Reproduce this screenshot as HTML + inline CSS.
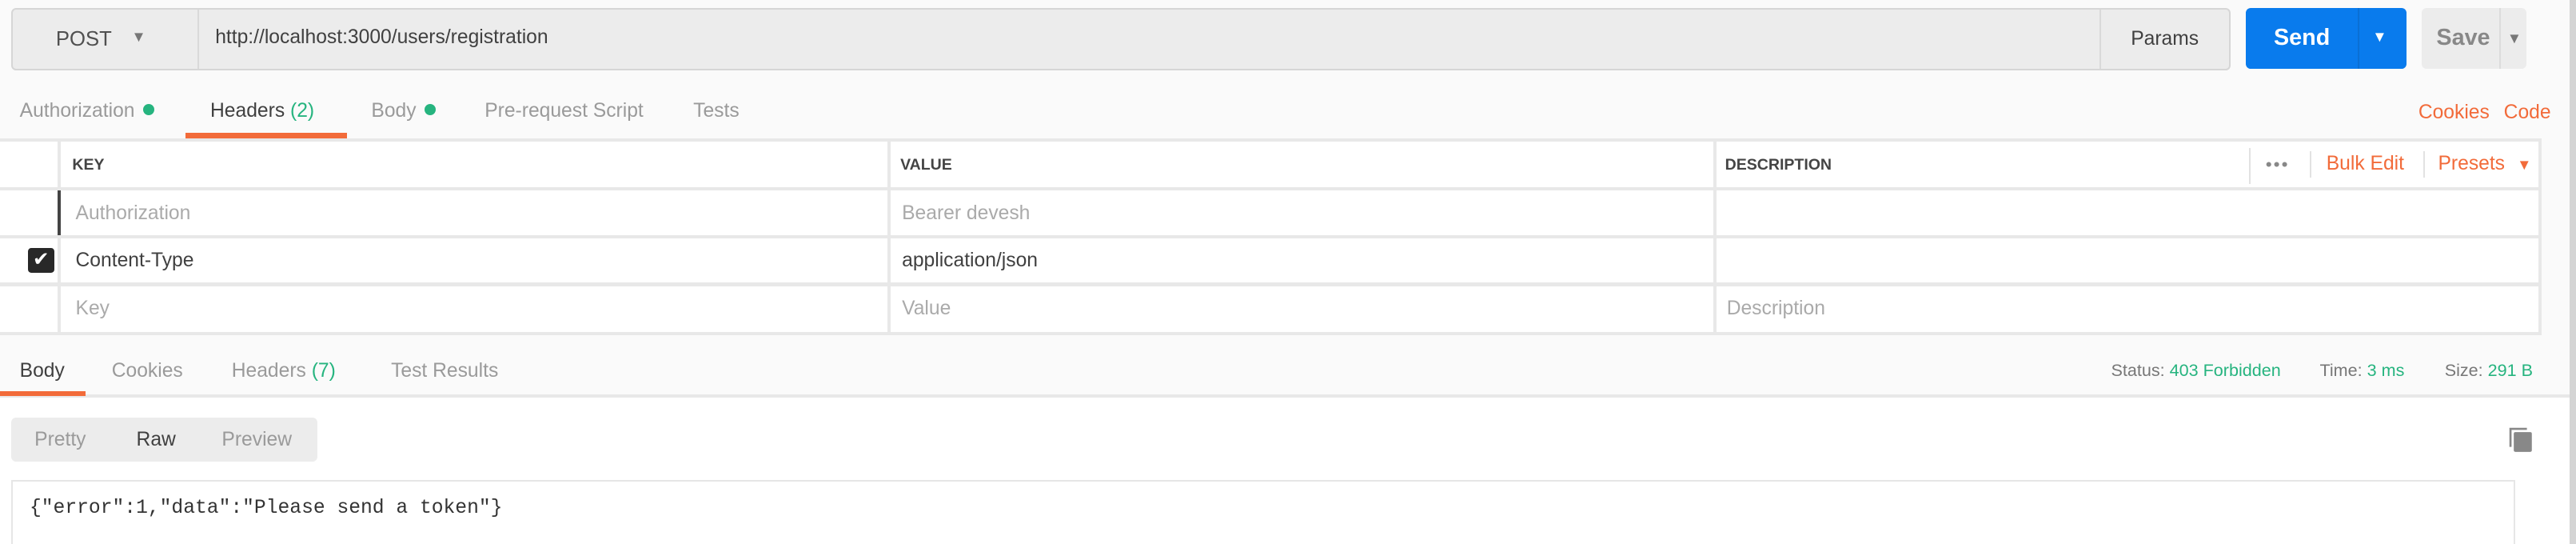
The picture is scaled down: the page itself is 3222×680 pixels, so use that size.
<!DOCTYPE html>
<html><head><meta charset="utf-8"><style>
html,body{margin:0;padding:0;width:3222px;height:680px;overflow:hidden;background:#fafafa}
#w{zoom:2.0549;width:1568px;height:331px;position:relative;font-family:"Liberation Sans",sans-serif;color:#505050}
.a{position:absolute;white-space:nowrap}
.t{font-size:12px;color:#9a9a9a}
.g{color:#26b47f}
.o{color:#f26b3a}
.dot{display:inline-block;width:7px;height:7px;border-radius:50%;background:#26b47f;margin-left:5px;vertical-align:1px}
.hl{position:absolute;height:2px;background:#e8e8e8}
.vl{position:absolute;width:2px;background:#e8e8e8}
.cell{font-size:12px}
</style></head><body><div id="w">
<div class="a" style="left:7px;top:5px;width:1349px;height:36px;background:#ececec;border:1px solid #d6d6d6;border-radius:3px"></div>
<div class="a" style="left:120px;top:6px;width:1px;height:36px;background:#d9d9d9"></div>
<div class="a" style="left:1278px;top:6px;width:1px;height:36px;background:#d9d9d9"></div>
<div class="a" style="left:34px;top:17px;font-size:12.5px;color:#505050">POST</div>
<div class="a" style="left:80px;top:17px;font-size:9px;color:#777">▼</div>
<div class="a" style="left:131px;top:16px;font-size:12px;color:#404040">http://localhost:3000/users/registration</div>
<div class="a" style="left:1297px;top:17px;font-size:12px;color:#404040">Params</div>
<div class="a" style="left:1367px;top:5px;width:98px;height:37px;background:#097bed;border-radius:3px"></div>
<div class="a" style="left:1435px;top:5px;width:1px;height:37px;background:#0a6fd4"></div>
<div class="a" style="left:1384px;top:15px;font-size:14px;font-weight:bold;color:#fff">Send</div>
<div class="a" style="left:1444px;top:17px;font-size:9px;color:#fff">▼</div>
<div class="a" style="left:1474px;top:5px;width:64px;height:37px;background:#ececec;border-radius:3px"></div>
<div class="a" style="left:1521px;top:5px;width:1px;height:37px;background:#dcdcdc"></div>
<div class="a" style="left:1483px;top:15px;font-size:14px;font-weight:bold;color:#888">Save</div>
<div class="a" style="left:1526px;top:18px;font-size:9px;color:#777">▼</div>
<div class="a" style="left:1564px;top:0;width:4px;height:331px;background:#d4d4d4"></div>
<div class="a t" style="left:12px;top:61px">Authorization<span class="dot"></span></div>
<div class="a t" style="left:128px;top:61px;color:#404040">Headers <span class="g">(2)</span></div>
<div class="a t" style="left:226px;top:61px">Body<span class="dot"></span></div>
<div class="a t" style="left:295px;top:61px">Pre-request Script</div>
<div class="a t" style="left:422px;top:61px">Tests</div>
<div class="a" style="left:113px;top:81px;width:98px;height:3px;background:#f26b3a"></div>
<div class="a t o" style="left:1472px;top:62px">Cookies</div>
<div class="a t o" style="left:1524px;top:62px">Code</div>
<div class="a" style="left:0;top:85px;width:1546px;height:118px;background:#fff"></div>
<div class="hl" style="left:0;top:84px;width:1547px"></div>
<div class="hl" style="left:0;top:114px;width:1547px"></div>
<div class="hl" style="left:0;top:143px;width:1547px"></div>
<div class="hl" style="left:0;top:172px;width:1547px"></div>
<div class="hl" style="left:0;top:202px;width:1547px"></div>
<div class="vl" style="left:35px;top:85px;height:118px"></div>
<div class="vl" style="left:540px;top:85px;height:118px"></div>
<div class="vl" style="left:1043px;top:85px;height:118px"></div>
<div class="vl" style="left:1545px;top:85px;height:118px"></div>
<div class="a" style="left:35px;top:116px;width:2px;height:27px;background:#444"></div>
<div class="a" style="left:44px;top:95px;font-size:9.5px;font-weight:bold;color:#444">KEY</div>
<div class="a" style="left:548px;top:95px;font-size:9.5px;font-weight:bold;color:#444">VALUE</div>
<div class="a" style="left:1050px;top:95px;font-size:9.5px;font-weight:bold;color:#444">DESCRIPTION</div>
<div class="a" style="left:1379px;top:94px;font-size:11px;color:#888;letter-spacing:1px">•••</div>
<div class="a" style="left:1406px;top:92px;width:1px;height:16px;background:#e2e2e2"></div>
<div class="a" style="left:1475px;top:92px;width:1px;height:16px;background:#e2e2e2"></div>
<div class="a" style="left:1369px;top:90px;width:1px;height:22px;background:#e2e2e2"></div>
<div class="a o" style="left:1416px;top:93px;font-size:12px">Bulk Edit</div>
<div class="a o" style="left:1484px;top:93px;font-size:12px">Presets <span style="font-size:9px;margin-left:4px">▼</span></div>
<div class="a cell" style="left:46px;top:123px;color:#aaa">Authorization</div>
<div class="a cell" style="left:549px;top:123px;color:#aaa">Bearer devesh</div>
<div class="a" style="left:17px;top:151px;width:16px;height:15px;background:#282828;border-radius:2px;color:#fff;font-size:12px;line-height:15px;text-align:center">✔</div>
<div class="a cell" style="left:46px;top:152px;color:#404040">Content-Type</div>
<div class="a cell" style="left:549px;top:152px;color:#404040">application/json</div>
<div class="a cell" style="left:46px;top:181px;color:#aaa">Key</div>
<div class="a cell" style="left:549px;top:181px;color:#aaa">Value</div>
<div class="a cell" style="left:1051px;top:181px;color:#aaa">Description</div>
<div class="a t" style="left:12px;top:219px;color:#404040">Body</div>
<div class="a t" style="left:68px;top:219px">Cookies</div>
<div class="a t" style="left:141px;top:219px">Headers <span class="g">(7)</span></div>
<div class="a t" style="left:238px;top:219px">Test Results</div>
<div class="hl" style="left:0;top:240px;width:1564px"></div>
<div class="a" style="left:0;top:238px;width:52px;height:3px;background:#f26b3a"></div>
<div class="a" style="left:0;top:242px;width:1564px;height:89px;background:#fff"></div>
<div class="a" style="left:1285px;top:219px;font-size:10.5px;color:#777">Status: <span class="g">403 Forbidden</span></div>
<div class="a" style="left:1412px;top:219px;font-size:10.5px;color:#777">Time: <span class="g">3 ms</span></div>
<div class="a" style="left:1488px;top:219px;font-size:10.5px;color:#777">Size: <span class="g">291 B</span></div>
<div class="a" style="left:7px;top:254px;width:186px;height:27px;background:#ececec;border-radius:3px"></div>
<div class="a t" style="left:21px;top:261px">Pretty</div>
<div class="a t" style="left:83px;top:261px;color:#404040">Raw</div>
<div class="a t" style="left:135px;top:261px">Preview</div>
<svg class="a" style="left:1527px;top:260px" width="15" height="15" viewBox="0 0 15 15"><path d="M1 12V1h10" fill="none" stroke="#888" stroke-width="1.3"/><rect x="3" y="3" width="11" height="12" rx="1" fill="#888"/></svg>
<div class="a" style="left:7px;top:292px;width:1522px;height:40px;border:1px solid #e6e6e6;border-bottom:none"></div>
<div class="a" style="left:18px;top:302px;font-family:'Liberation Mono',monospace;font-size:12px;color:#333">{"error":1,"data":"Please send a token"}</div>
</div></body></html>
